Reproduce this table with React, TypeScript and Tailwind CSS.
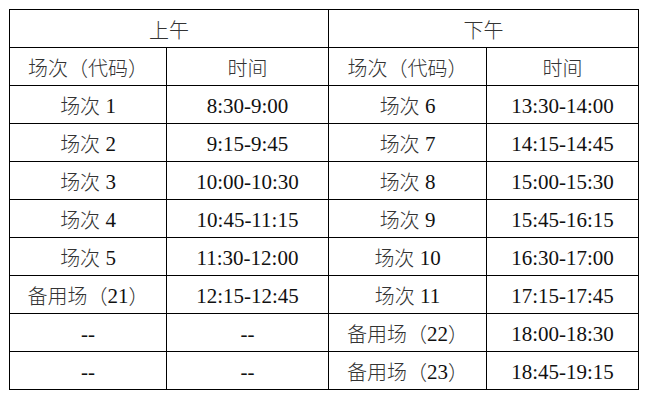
import React from "react";

const Zh = ({ children }: { children: React.ReactNode }) => (
  <span
    className="text-[#333] font-light text-[20px]"
    style={{ fontFamily: '"Noto Sans CJK SC", sans-serif' }}
  >
    {children}
  </span>
);
const Num = ({ children }: { children: React.ReactNode }) => (
  <span className="text-[#111] text-[21px]" style={{ fontFamily: '"Liberation Serif", serif' }}>
    {children}
  </span>
);

const session = (n: string) => (
  <>
    <Zh>场次</Zh>
    <Num>{" " + n}</Num>
  </>
);
const spare = (n: string) => (
  <>
    <Zh>备用场（</Zh>
    <Num>{n}</Num>
    <Zh>）</Zh>
  </>
);
const t = (s: string) => <Num>{s}</Num>;

const data: React.ReactNode[][] = [
  [session("1"), t("8:30-9:00"), session("6"), t("13:30-14:00")],
  [session("2"), t("9:15-9:45"), session("7"), t("14:15-14:45")],
  [session("3"), t("10:00-10:30"), session("8"), t("15:00-15:30")],
  [session("4"), t("10:45-11:15"), session("9"), t("15:45-16:15")],
  [session("5"), t("11:30-12:00"), session("10"), t("16:30-17:00")],
  [spare("21"), t("12:15-12:45"), session("11"), t("17:15-17:45")],
  [t("--"), t("--"), spare("22"), t("18:00-18:30")],
  [t("--"), t("--"), spare("23"), t("18:45-19:15")],
];

const cellCls =
  "h-[38px] border-r border-b border-black flex items-center justify-center pt-[3px] leading-none whitespace-pre";

export default function App() {
  return (
    <div className="w-[657px] h-[402px] bg-white pt-[9px] pl-[9px]">
      <div className="w-[630px] border-l border-t border-black grid grid-cols-[157px_162px_158px_152px]">
        <div className={cellCls + " col-span-2"}>
          <Zh>上午</Zh>
        </div>
        <div className={cellCls + " col-span-2"}>
          <Zh>下午</Zh>
        </div>
        <div className={cellCls}>
          <Zh>场次（代码）</Zh>
        </div>
        <div className={cellCls}>
          <Zh>时间</Zh>
        </div>
        <div className={cellCls}>
          <Zh>场次（代码）</Zh>
        </div>
        <div className={cellCls}>
          <Zh>时间</Zh>
        </div>
        {data.map((r, i) =>
          r.map((c, j) => (
            <div key={i + "-" + j} className={cellCls}>
              {c}
            </div>
          ))
        )}
      </div>
    </div>
  );
}
